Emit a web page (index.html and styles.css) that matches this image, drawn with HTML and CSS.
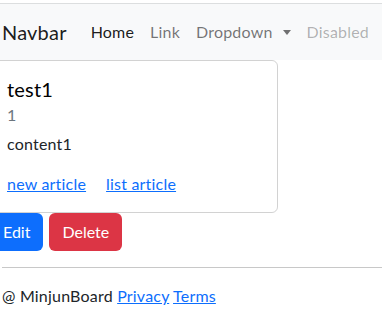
FILE: index.html
```html
<!DOCTYPE html>
<html lang="ko">
<head>
  <meta charset="UTF-8">
  <meta name="viewport" content="width=device-width, initial-scale=1.0">
  <title>MinjunBoard</title>
  <link rel="stylesheet" href="styles.css">
</head>
<body>
<div class="page">
  <!-- Navbar -->
  <nav class="navbar">
    <a class="brand" href="#">Navbar</a>
    <ul class="nav">
      <li><a class="nav-link active" href="#">Home</a></li>
      <li><a class="nav-link" href="#">Link</a></li>
      <li><a class="nav-link dropdown" href="#">Dropdown</a></li>
      <li><a class="nav-link disabled">Disabled</a></li>
    </ul>
  </nav>

  <!-- Article card -->
  <div class="card">
    <div class="card-body">
      <h5 class="card-title">test1</h5>
      <h6 class="card-subtitle">1</h6>
      <p class="card-text">content1</p>
      <div class="card-links">
        <a href="#" class="card-link">new article</a>
        <a href="#" class="card-link">list article</a>
      </div>
    </div>
  </div>

  <div class="actions">
    <button class="btn btn-primary">Edit</button>
    <button class="btn btn-danger">Delete</button>
  </div>

  <footer class="footer">
    <hr>
    <p>@ MinjunBoard <a href="#">Privacy</a> <a href="#">Terms</a></p>
  </footer>
</div>
</body>
</html>
```

FILE: styles.css
```css
html {
  overflow: hidden;
}
body {
  margin: 0;
  font-family: Lato, "Noto Sans CJK KR", sans-serif;
  font-size: 16px;
  line-height: 1.5;
  letter-spacing: 0.2px;
  color: #212529;
  background: #fff;
}
a {
  color: #0d6efd;
}
.page {
  width: calc(100% + 10px);
  margin-left: -10px;
  padding-top: 3px;
}

/* Navbar */
.navbar {
  display: flex;
  align-items: center;
  height: 56px;
  padding: 0 12px;
  background-color: #f8f9fa;
  border-top: 1px solid #dcdedf;
  white-space: nowrap;
}
.brand {
  font-size: 20px;
  line-height: 30px;
  margin-right: 16px;
  color: rgba(0, 0, 0, .9);
  text-decoration: none;
}
.nav {
  display: flex;
  list-style: none;
  margin: 0;
  padding: 0;
}
.nav-link {
  display: block;
  padding: 8px;
  color: rgba(0, 0, 0, .55);
  text-decoration: none;
}
.nav-link.active {
  color: rgba(0, 0, 0, .9);
}
.nav-link.disabled {
  color: rgba(0, 0, 0, .3);
}
.dropdown::after {
  content: "";
  display: inline-block;
  margin-left: 10px;
  vertical-align: 3px;
  border-top: 5px solid;
  border-right: 4px solid transparent;
  border-left: 4px solid transparent;
}

/* Card */
.card {
  width: 288px;
  box-sizing: border-box;
  border: 1px solid rgba(0, 0, 0, .175);
  border-radius: 6px;
}
.card-body {
  padding: 16px;
}
.card-title {
  margin: 0 0 8px;
  font-size: 20px;
  font-weight: 400;
  line-height: 1.2;
  color: #000;
}
.card-subtitle {
  margin: -4px 0 8px;
  font-size: 16px;
  font-weight: 400;
  line-height: 1.2;
  color: #6c757d;
}
.card-text {
  margin: 0 0 16px;
}
.card-links {
  display: flex;
  gap: 20px;
}

/* Buttons */
.actions {
  display: flex;
  gap: 6px;
}
.btn {
  font-family: inherit;
  font-size: 16px;
  line-height: 24px;
  letter-spacing: 0;
  padding: 6px 12px;
  border: 1px solid transparent;
  border-radius: 6px;
  color: #fff;
}
.btn-primary {
  background-color: #0d6efd;
}
.btn-danger {
  background-color: #dc3545;
}

/* Footer */
.footer {
  padding-left: 12px;
}
.footer hr {
  margin: 16px 0;
  border: 0;
  border-top: 1px solid #c8c8c8;
}
.footer p {
  margin: 0;
}
```
